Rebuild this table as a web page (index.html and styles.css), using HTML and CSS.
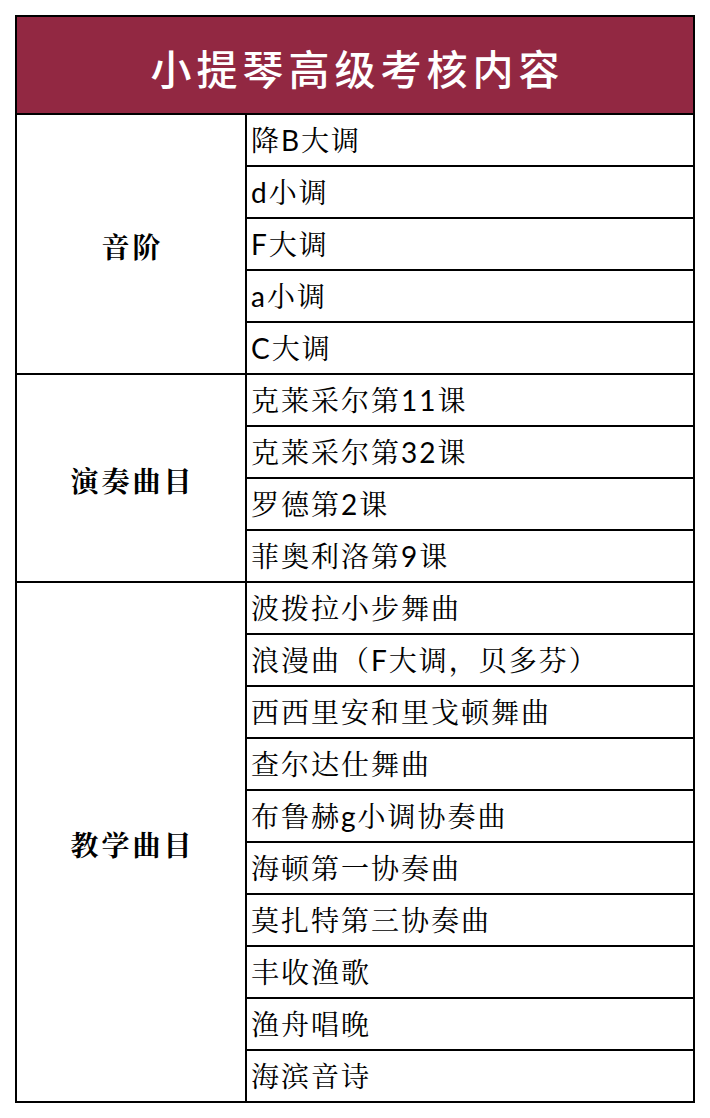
FILE: index.html
```
<!DOCTYPE html>
<html lang="zh">
<head>
<meta charset="utf-8">
<title>小提琴高级考核内容</title>
<link rel="stylesheet" href="styles.css">
</head>
<body>
<table class="exam">
  <colgroup><col class="c-cat"><col class="c-item"></colgroup>
  <thead>
    <tr><th colspan="2" class="title">小提琴高级考核内容</th></tr>
  </thead>
  <tbody>
    <tr><td rowspan="5" class="cat">音阶</td><td class="item">降B大调</td></tr>
    <tr><td class="item">d小调</td></tr>
    <tr><td class="item">F大调</td></tr>
    <tr><td class="item">a小调</td></tr>
    <tr><td class="item">C大调</td></tr>
    <tr><td rowspan="4" class="cat">演奏曲目</td><td class="item">克莱采尔第11课</td></tr>
    <tr><td class="item">克莱采尔第32课</td></tr>
    <tr><td class="item">罗德第2课</td></tr>
    <tr><td class="item">菲奥利洛第9课</td></tr>
    <tr><td rowspan="10" class="cat">教学曲目</td><td class="item">波拨拉小步舞曲</td></tr>
    <tr><td class="item">浪漫曲（F大调，贝多芬）</td></tr>
    <tr><td class="item">西西里安和里戈顿舞曲</td></tr>
    <tr><td class="item">查尔达仕舞曲</td></tr>
    <tr><td class="item">布鲁赫g小调协奏曲</td></tr>
    <tr><td class="item">海顿第一协奏曲</td></tr>
    <tr><td class="item">莫扎特第三协奏曲</td></tr>
    <tr><td class="item">丰收渔歌</td></tr>
    <tr><td class="item">渔舟唱晚</td></tr>
    <tr><td class="item">海滨音诗</td></tr>
  </tbody>
</table>
</body>
</html>
```
FILE: styles.css
```
html, body {
  margin: 0;
  padding: 0;
  background: #fff;
}
body {
  padding: 15px 0 0 15px;
}
.exam {
  border-collapse: collapse;
  table-layout: fixed;
  width: 678px;
  border: 2px solid #000;
}
.c-cat { width: 230px; }
.c-item { width: 448px; }
.exam th, .exam td {
  border: 2px solid #000;
  padding: 0;
  box-sizing: border-box;
}
.exam .title {
  background: #922842;
  color: #fff;
  height: 98px;
  font-family: "Noto Sans CJK SC", sans-serif;
  font-weight: 500;
  font-size: 41px;
  letter-spacing: 5px;
  text-indent: 5px;
  text-align: center;
  vertical-align: middle;
  line-height: 1;
  padding-top: 4px;
}
.exam .cat {
  font-family: "Noto Serif CJK SC", "Noto Sans CJK SC", serif;
  font-weight: 700;
  font-size: 28px;
  letter-spacing: 3px;
  text-indent: 3px;
  text-align: center;
  vertical-align: middle;
  color: #000;
  padding-top: 4px;
}
.exam .item {
  height: 52px;
  font-family: "Lato", "Noto Serif CJK SC", "Noto Sans CJK SC", serif;
  font-size: 28px;
  letter-spacing: 2px;
  padding: 0 4px;
  color: #000;
  vertical-align: middle;
  line-height: 1;
  white-space: nowrap;
}
```
